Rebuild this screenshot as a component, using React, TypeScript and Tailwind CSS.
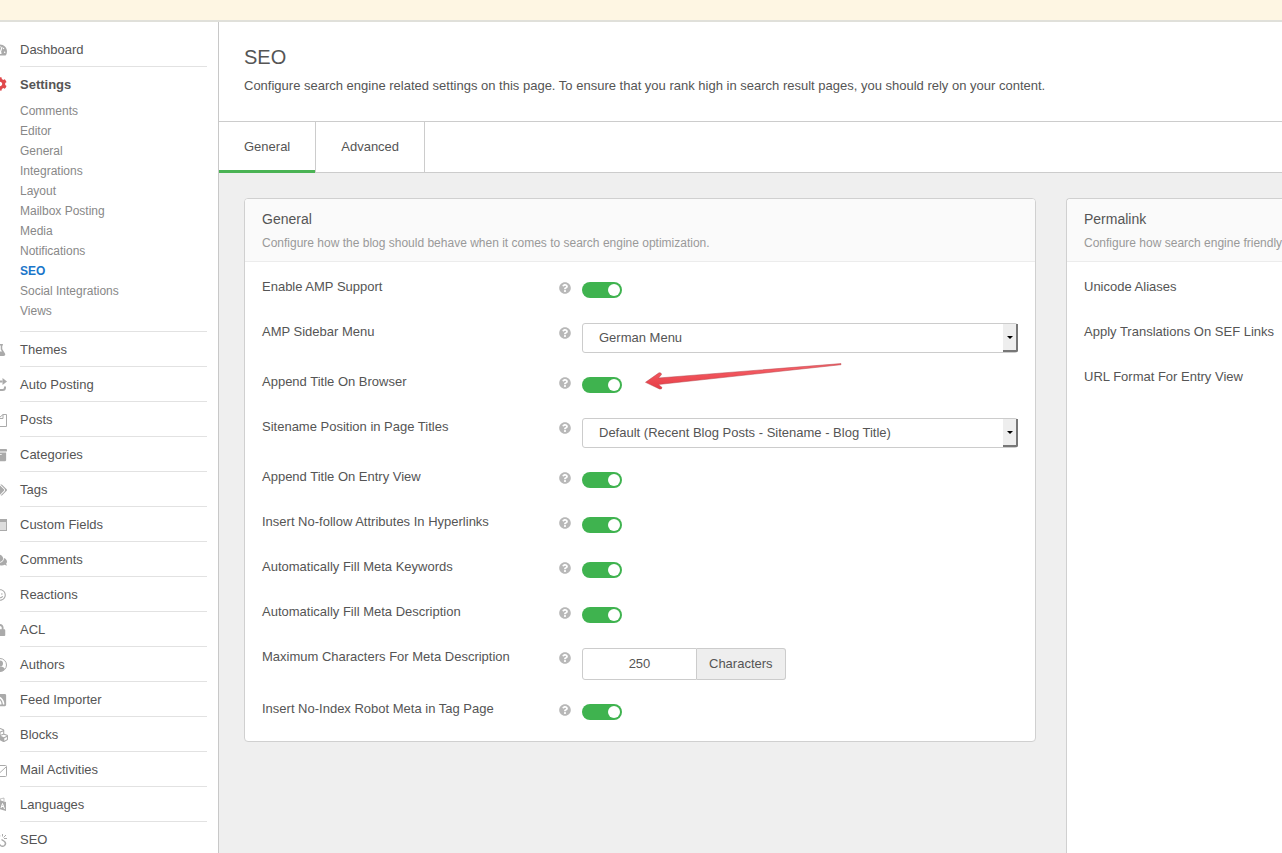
import React from 'react';
import {
  FaTachometerAlt,
  FaCog,
  FaFlask,
  FaArchive,
  FaTags,
  FaComments,
  FaRegSmile,
  FaLock,
  FaRssSquare,
  FaCubes,
  FaQuestionCircle,
} from 'react-icons/fa';

const RepostIcon = () => (
  <svg viewBox="0 0 16 16" className="h-4 w-4" fill="none" stroke="currentColor" strokeWidth="2">
    <path d="M1 8V6.500Q1 4.500 3 4.500H10.500M13 9.500V10.500Q13 13 10.500 13H7.500Q4.500 13 4.500 10" />
    <path d="M10.500 1L15 4.500L10.500 8Z" fill="currentColor" stroke="none" />
  </svg>
);

const PagesIcon = () => (
  <svg viewBox="0 0 16 16" className="h-4 w-4" fill="none" stroke="currentColor" strokeWidth="1">
    <path d="M6.500 11.500H1.500V4.500L4.500 1.500H7.500M7.500 5.500L11 2.500H14.500V14.500H7.500ZM11 2.500V6.500H7.500" />
  </svg>
);

const FormIcon = () => (
  <svg viewBox="0 0 16 16" className="h-4 w-4" fill="currentColor">
    <path d="M1 2H15V14H1Z" fillOpacity="0.4" />
    <path fillRule="evenodd" d="M1 2H15V14H1ZM2 5V13H14V5Z" />
  </svg>
);

const UserIcon = () => (
  <svg viewBox="0 0 16 16" className="h-4 w-4" fill="currentColor">
    <circle cx="8" cy="8" r="6.500" fill="none" stroke="currentColor" />
    <circle cx="8" cy="6.500" r="3" />
    <path d="M3 12Q4.500 9.500 6.500 9.500H9.500Q11.500 9.500 13 12Q11 14.500 8 14.500Q5 14.500 3 12Z" />
  </svg>
);

const MailIcon = () => (
  <svg viewBox="0 0 16 16" className="h-4 w-4" fill="none" stroke="currentColor">
    <rect x="0.500" y="3.500" width="14" height="11" rx="1" />
    <path d="M1 6L7 11.500L14 5" />
  </svg>
);

const LanguageIcon = () => (
  <svg viewBox="0 0 16 16" className="h-4 w-4">
    <path d="M1 4L8 2V12L1 14Z" fill="none" stroke="currentColor" />
    <path d="M7 3L14 5V14L7 12Z" fill="currentColor" />
    <path d="M9 11L10.500 6.500L12.500 12M9.500 9.500H11.500" fill="none" stroke="white" />
    <path d="M8 2L12 1V4" fill="none" stroke="currentColor" strokeWidth="0.700" />
  </svg>
);

const BrokenLinkIcon = () => (
  <svg viewBox="0 0 16 16" className="h-4 w-4" fill="none" stroke="currentColor" strokeWidth="1.500">
    <path d="M9.500 7.500L12.500 9.500Q14.500 11.500 12.500 13.500Q10.500 15 8.500 13.500L6.500 11.500" />
    <path d="M5.500 8.500L3 6Q1.500 4 3 2.500Q5 1 7 3L8 4.500" />
    <path d="M10.500 2V4.500M14 3L11.500 5.500M15 6.500H12" strokeWidth="1" />
  </svg>
);

const settingsLinks = [
  'Comments',
  'Editor',
  'General',
  'Integrations',
  'Layout',
  'Mailbox Posting',
  'Media',
  'Notifications',
  'SEO',
  'Social Integrations',
  'Views',
];

const menu = [
  { label: 'Themes', icon: <FaFlask className="h-3 w-3" /> },
  { label: 'Auto Posting', icon: <RepostIcon /> },
  { label: 'Posts', icon: <PagesIcon /> },
  { label: 'Categories', icon: <FaArchive className="h-3.5 w-3.5" /> },
  { label: 'Tags', icon: <FaTags className="h-3.5 w-3.5" /> },
  { label: 'Custom Fields', icon: <FormIcon /> },
  { label: 'Comments', icon: <FaComments className="h-3.5 w-3.5" /> },
  { label: 'Reactions', icon: <FaRegSmile className="h-3 w-3" /> },
  { label: 'ACL', icon: <FaLock className="h-3 w-3" /> },
  { label: 'Authors', icon: <UserIcon /> },
  { label: 'Feed Importer', icon: <FaRssSquare className="h-3.5 w-3.5" /> },
  { label: 'Blocks', icon: <FaCubes className="h-4 w-4" /> },
  { label: 'Mail Activities', icon: <MailIcon /> },
  { label: 'Languages', icon: <LanguageIcon /> },
  { label: 'SEO', icon: <BrokenLinkIcon /> },
];

const MenuIcon: React.FC<{ children: React.ReactNode }> = ({ children }) => (
  <span className="-ml-2 flex w-4 shrink-0 justify-center text-[#aaaaaa]">{children}</span>
);

const Sidebar: React.FC = () => (
  <nav className="w-[219px] shrink-0 overflow-hidden border-r border-[#c8c8c8] bg-white pt-2.5 pr-[11px]">
    <ul>
      <li>
        <a href="#dashboard" className="flex items-center gap-3">
          <MenuIcon><FaTachometerAlt className="h-3.5 w-3.5" /></MenuIcon>
          <span className="flex-1 border-b border-[#e2e2e2] pt-0.5 leading-8">Dashboard</span>
        </a>
      </li>
      <li>
        <a href="#settings" className="flex items-center gap-3">
          <span className="-ml-2 flex w-4 shrink-0 justify-center text-[#e0494c]">
            <FaCog className="h-3.5 w-3.5" />
          </span>
          <span className="flex-1 pt-0.5 font-bold leading-8">Settings</span>
        </a>
        <ul className="ml-5 border-b border-[#e2e2e2] pb-2.5 text-xs text-[#888888]">
          {settingsLinks.map(link => (
            <li key={link}>
              <a
                href="#settings"
                className={link === 'SEO' ? 'block font-bold leading-5 text-[#1b76ca]' : 'block leading-5'}
              >
                {link}
              </a>
            </li>
          ))}
        </ul>
      </li>
      {menu.map(item => (
        <li key={item.label}>
          <a href="#menu" className="flex items-center gap-3">
            <MenuIcon>{item.icon}</MenuIcon>
            <span className="flex-1 border-b border-[#e2e2e2] pt-0.5 leading-8">{item.label}</span>
          </a>
        </li>
      ))}
    </ul>
  </nav>
);

const Field: React.FC<{ id: string; label: string; children: React.ReactNode }> = ({ id, label, children }) => (
  <div className="flex min-h-[25px] items-start">
    <label htmlFor={id} className="w-[297px] shrink-0 leading-[18px]">{label}</label>
    <FaQuestionCircle className="mt-1 mr-[11px] h-3 w-3 shrink-0 text-[#b8b8b8]" />
    {children}
  </div>
);

const Toggle: React.FC<{ id: string }> = ({ id }) => (
  <span className="relative mt-1 block h-4 w-10 shrink-0">
    <input
      id={id}
      type="checkbox"
      defaultChecked
      className="peer absolute inset-0 h-4 w-10 cursor-pointer appearance-none rounded-full bg-[#bbbbbb] checked:bg-[#3fb34f]"
    />
    <span className="pointer-events-none relative flex h-4 items-center px-0.5 peer-checked:justify-end">
      <span className="h-3 w-3 rounded-full bg-white" />
    </span>
  </span>
);

const Select: React.FC<{ id: string; value: string }> = ({ id, value }) => (
  <div className="relative flex-1">
    <select
      id={id}
      className="block h-[30px] w-full appearance-none rounded-[3px] border border-[#cccccc] bg-white pr-5 pl-4 text-[13px]"
    >
      <option>{value}</option>
    </select>
    <span className="pointer-events-none absolute inset-y-px right-0 flex w-[15px] items-center justify-center rounded-br-[2px] border-r-2 border-b-2 border-[#777777] bg-[#eeeeee]">
      <svg viewBox="0 0 6 3" className="h-[3px] w-1.5" fill="#000000">
        <path d="M0 0H6L3 3Z" />
      </svg>
    </span>
  </div>
);

// Red pointer that calls out the browser title option
const Pointer = () => (
  <svg
    viewBox="640 360 205 34"
    className="pointer-events-none absolute top-[-13px] left-[58px] h-[34px] w-[205px]"
  >
    <defs>
      <linearGradient id="pointer" x1="0" y1="0" x2="0" y2="1">
        <stop offset="0" stopColor="#f8646b" />
        <stop offset="1" stopColor="#e63c45" />
      </linearGradient>
    </defs>
    <path
      d="M645.500 382.300L659 372.800Q661.500 372.300 661.500 374.500L658.500 378L841 363.600V364.700L658.500 384.500L662 387.500Q662 389.500 659.500 389Z"
      fill="url(#pointer)"
      stroke="#b5474c"
      strokeWidth="0.500"
    />
  </svg>
);

const CardHeader: React.FC<{ title: string; text: string }> = ({ title, text }) => (
  <div className="whitespace-nowrap rounded-t-[3px] border-b border-[#ececec] bg-[#fafafa] px-[17px] pt-2.5 pb-2">
    <h2 className="text-sm leading-5">{title}</h2>
    <p className="mt-1 text-xs leading-5 text-[#999999]">{text}</p>
  </div>
);

const App: React.FC = () => (
  <div className="flex h-screen flex-col overflow-hidden bg-white font-['Liberation_Sans',Arial,sans-serif] text-[13px] text-[#555555]">
    <div className="h-[22px] shrink-0 border-b-2 border-[#e0e0da] bg-[#fef6e3]" />
    <div className="flex min-h-0 flex-1">
      <Sidebar />
      <main className="flex min-w-0 flex-1 flex-col">
        <header className="h-[100px] shrink-0 border-b border-[#cccccc] px-[25px] pt-[23px]">
          <h1 className="text-xl leading-6">SEO</h1>
          <p className="mt-2 leading-[18px]">
            Configure search engine related settings on this page. To ensure that you rank high in search result pages, you should rely on your content.
          </p>
        </header>

        <div role="tablist" className="flex h-[51px] shrink-0 border-b border-[#cccccc]">
          <button
            type="button"
            role="tab"
            aria-selected="true"
            className="relative border-r border-[#cccccc] px-[25px] after:absolute after:inset-x-0 after:-bottom-px after:h-[3px] after:bg-[#4ab354]"
          >
            General
          </button>
          <button type="button" role="tab" aria-selected="false" className="border-r border-[#cccccc] px-[25px]">
            Advanced
          </button>
        </div>

        <div className="flex min-h-0 flex-1 gap-[30px] bg-[#efefef] pt-[25px] pl-[25px]">
          <section className="min-w-0 flex-1 self-start rounded border border-[#d0d0d0] bg-white">
            <CardHeader
              title="General"
              text="Configure how the blog should behave when it comes to search engine optimization."
            />
            <div className="flex flex-col gap-5 px-[17px] pt-4 pb-4">
              <Field id="amp" label="Enable AMP Support">
                <Toggle id="amp" />
              </Field>
              <Field id="amp-menu" label="AMP Sidebar Menu">
                <Select id="amp-menu" value="German Menu" />
              </Field>
              <Field id="browser-title" label="Append Title On Browser">
                <div className="relative">
                  <Toggle id="browser-title" />
                  <Pointer />
                </div>
              </Field>
              <Field id="sitename" label="Sitename Position in Page Titles">
                <Select id="sitename" value="Default (Recent Blog Posts - Sitename - Blog Title)" />
              </Field>
              <Field id="entry-title" label="Append Title On Entry View">
                <Toggle id="entry-title" />
              </Field>
              <Field id="nofollow" label="Insert No-follow Attributes In Hyperlinks">
                <Toggle id="nofollow" />
              </Field>
              <Field id="keywords" label="Automatically Fill Meta Keywords">
                <Toggle id="keywords" />
              </Field>
              <Field id="description" label="Automatically Fill Meta Description">
                <Toggle id="description" />
              </Field>
              <Field id="max-chars" label="Maximum Characters For Meta Description">
                <div className="flex h-8">
                  <input
                    id="max-chars"
                    type="text"
                    defaultValue="250"
                    className="w-[115px] rounded-l-[3px] border border-[#cccccc] bg-white text-center"
                  />
                  <span className="flex items-center rounded-r-[3px] border border-l-0 border-[#cccccc] bg-[#eeeeee] px-3">
                    Characters
                  </span>
                </div>
              </Field>
              <Field id="noindex" label="Insert No-Index Robot Meta in Tag Page">
                <Toggle id="noindex" />
              </Field>
            </div>
          </section>

          <section className="w-[216px] shrink-0 overflow-hidden rounded-tl border-t border-l border-[#d0d0d0] bg-white">
            <CardHeader title="Permalink" text="Configure how search engine friendly" />
            <div className="flex flex-col gap-[27px] whitespace-nowrap px-[17px] pt-4 leading-[18px]">
              <span>Unicode Aliases</span>
              <span>Apply Translations On SEF Links</span>
              <span>URL Format For Entry View</span>
            </div>
          </section>
        </div>
      </main>
    </div>
  </div>
);

export default App;
